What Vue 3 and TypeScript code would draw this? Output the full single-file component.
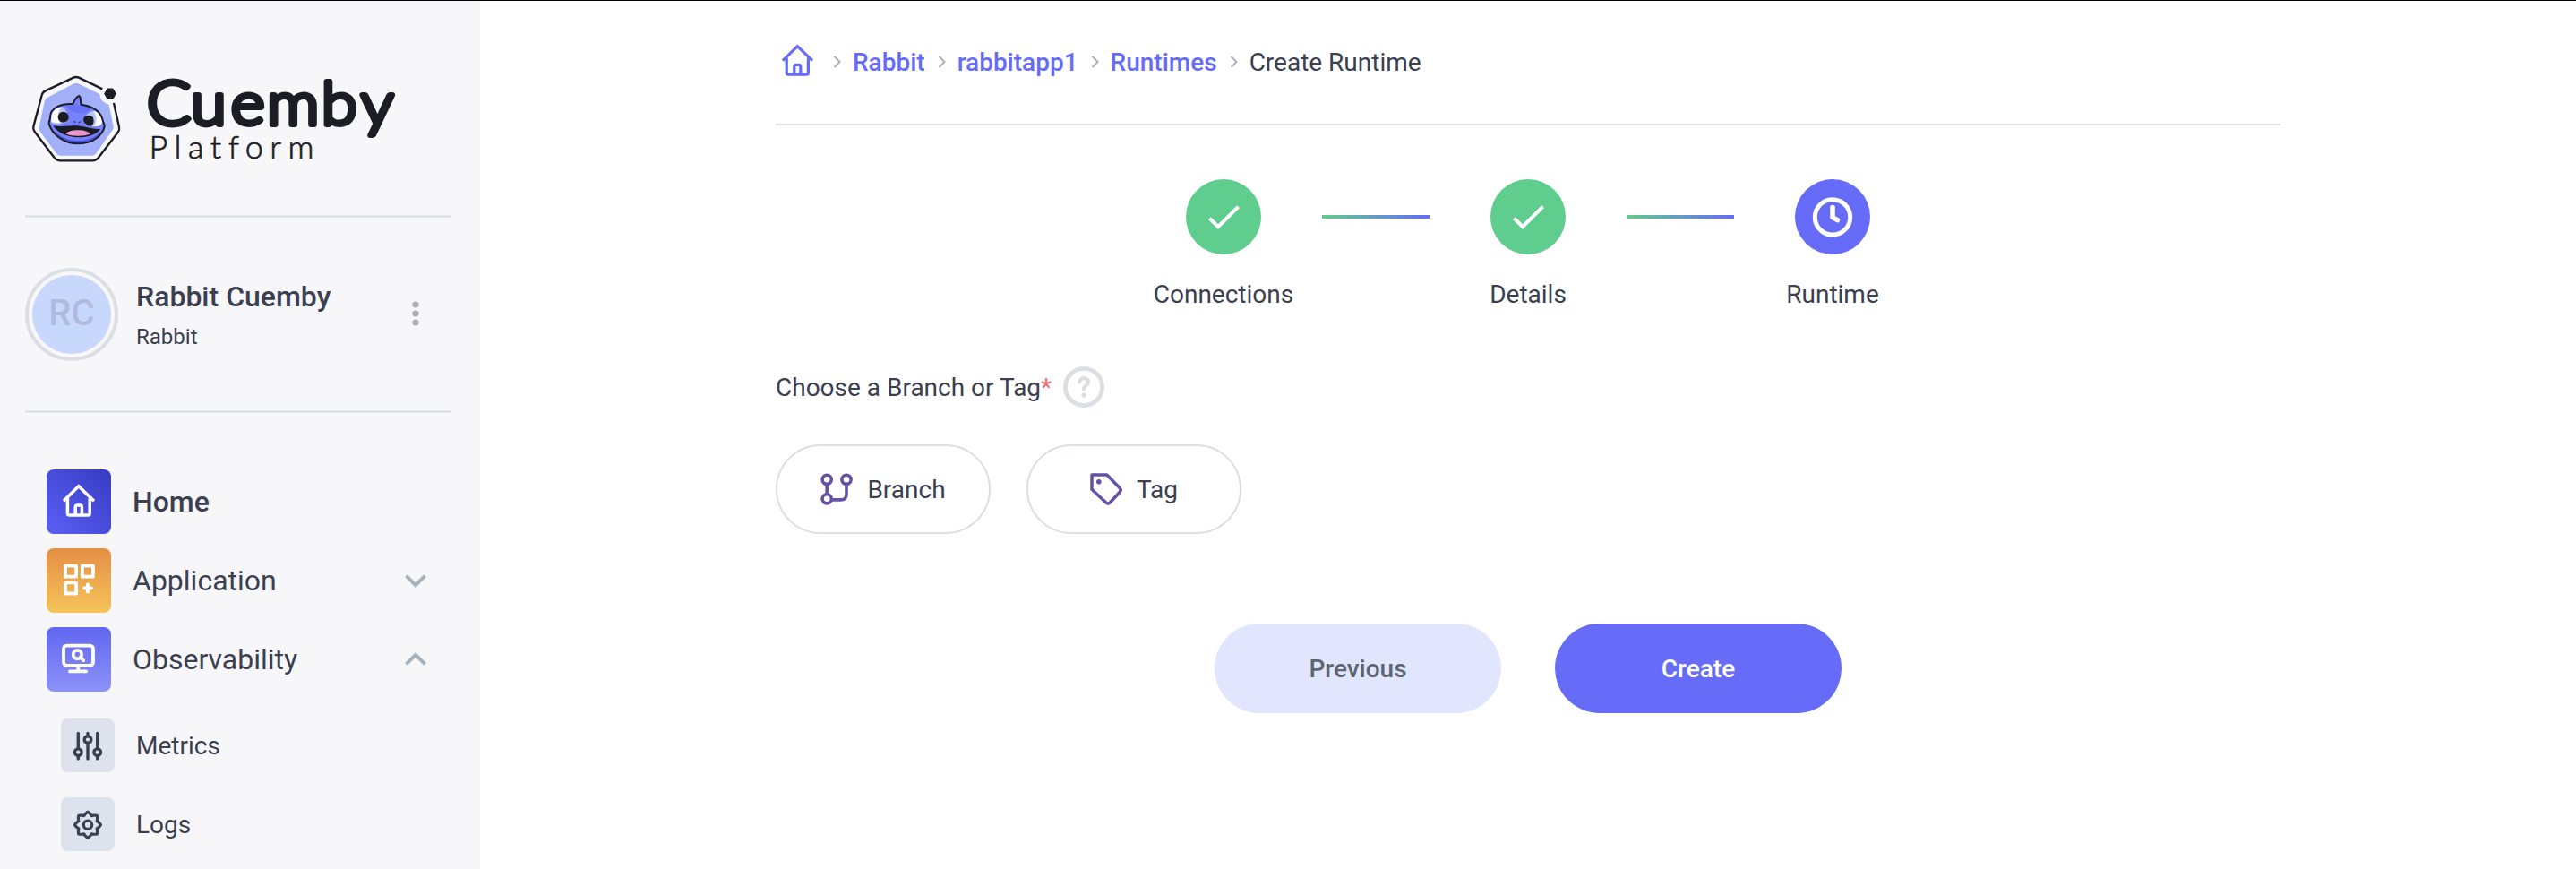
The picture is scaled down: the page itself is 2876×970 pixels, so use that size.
<script setup lang="ts">
interface Crumb {
  label: string
  current?: boolean
}
interface Step {
  label: string
  state: 'done' | 'active'
}

const crumbs: Crumb[] = [
  { label: 'Rabbit' },
  { label: 'rabbitapp1' },
  { label: 'Runtimes' },
  { label: 'Create Runtime', current: true },
]

const steps: Step[] = [
  { label: 'Connections', state: 'done' },
  { label: 'Details', state: 'done' },
  { label: 'Runtime', state: 'active' },
]

// Closed wavy outline with eight lobes for the gear icon
const gearPath: string = (() => {
  const points: string[] = []
  for (let i = 0; i < 160; i++) {
    const a = (i / 160) * Math.PI * 2
    const wave = Math.cos(8 * a)
    const r = 12.7 + 1.75 * wave
    const t = a - 0.035 * Math.sin(16 * a)
    points.push(`${(30 + r * Math.cos(t)).toFixed(2)} ${(30.7 + r * Math.sin(t)).toFixed(2)}`)
  }
  return `M${points.join('L')}Z`
})()
</script>

<template>
  <div class="page">
    <aside class="sidebar">
      <div class="brand">
        <svg class="mascot" viewBox="0 0 390 390" aria-hidden="true">
          <path d="M188 70Q195 66 202 70L296 116L306 146L320 214Q321 220 317 225L262 304Q256 311 248 311H142Q135 311 130 305L74 230Q69 223 71 215L89 130Q91 122 98 117Z" fill="#a2b0f9" />
          <circle cx="309" cy="104" r="35" fill="#f7f7fa" />
          <path d="M283 88L204 50Q195 46 186 50L92 94Q82 99 80 109L52 214Q50 223 56 231L122 318Q130 328 142 328H250Q262 328 269 319L335 233Q341 225 339 215L321 135" fill="none" stroke="#1c1d24" stroke-width="7" />
          <path d="M300 87H318L328 104L318 121H300L290 104Z" fill="#1c1d24" stroke="#1c1d24" stroke-width="3" stroke-linejoin="round" />
          <path d="M184 138C190 124 195 113 205 111C212 116 209 130 212 140C246 145 276 158 284 192C284 201 292 204 290 214C282 246 250 270 204 271C160 272 115 244 104 205C102 195 108 194 108 184C108 148 148 136 184 138Z" fill="#7681fa" />
          <path d="M110 184C110 162 128 148 150 148C165 160 172 180 164 198C145 208 122 208 112 202Z" fill="#b7c3fb" />
          <path d="M112 182C114 163 128 151 146 150C132 164 130 186 142 201C128 204 116 200 112 196Z" fill="#fff" />
          <path d="M225 208C218 185 232 162 256 162C272 164 282 178 282 202C278 212 264 215 250 214Z" fill="#b7c3fb" />
          <path d="M252 162C270 164 281 178 283 200C278 211 266 214 254 213C266 198 266 180 252 162Z" fill="#fff" />
          <path d="M160 143C172 160 188 168 204 168C220 170 236 164 248 152L212 142L184 139Z" fill="#6874f7" />
          <circle cx="152" cy="182" r="18" fill="#1c1d24" />
          <path d="M220 186C224 176 238 174 248 179C256 186 256 204 247 212C232 212 216 202 220 186Z" fill="#1c1d24" />
          <path d="M188 197l4 2M208 198l-4 2" stroke="#303995" stroke-width="4" stroke-linecap="round" />
          <path d="M118 211C142 216 172 211 197 211C224 213 250 224 276 222C262 241 236 250 202 250C166 249 136 238 118 211Z" fill="#1c1d24" />
          <path d="M159 238C170 227 190 224 206 226C222 226 236 231 244 238C222 248 180 248 159 238Z" fill="#ec98cc" />
          <path d="M122 228C144 252 174 261 204 261C236 261 260 249 276 232C264 256 236 268 204 269C168 268 136 252 122 228Z" fill="#4754e8" />
          <path d="M184 138C190 124 195 113 205 111C212 116 209 130 212 140C246 145 276 158 284 192C284 201 292 204 290 214C282 246 250 270 204 271C160 272 115 244 104 205C102 195 108 194 108 184C108 148 148 136 184 138Z" fill="none" stroke="#1c1d24" stroke-width="6" stroke-linejoin="round" />
        </svg>
        <svg class="wordmark" viewBox="0 0 290 110" role="img" aria-label="Cuemby Platform">
          <text class="word" y="63.6" x="0 45.2 86.8 124 180.4 221.2" transform="scale(1.08 1)">Cuemby</text>
          <text class="subword" x="2.5" y="102.3" textLength="184">Platform</text>
        </svg>
      </div>
      <div class="rule"></div>
      <div class="profile">
        <div class="avatar"><div class="avatar-disc">RC</div></div>
        <div class="profile-text">
          <div class="profile-name">Rabbit Cuemby</div>
          <div class="profile-org">Rabbit</div>
        </div>
        <svg class="more" viewBox="0 0 8 28" aria-hidden="true">
          <circle cx="4" cy="4" r="3.6" /><circle cx="4" cy="14" r="3.6" /><circle cx="4" cy="24" r="3.6" />
        </svg>
      </div>
      <div class="rule"></div>

      <nav class="nav">
        <a class="nav-item active">
          <svg class="tile home" viewBox="0 0 72 72" fill="none" stroke="#fff" stroke-width="3.5" stroke-linejoin="round" aria-hidden="true">
            <path d="M19 35.2L35.8 18.7L53 35.2" stroke-linejoin="miter" />
            <path d="M23.4 32V49Q23.4 51 25.4 51H46.2Q48.2 51 48.2 49V32" />
            <path d="M32.2 51V42.2Q32.2 40 34.4 40H37.2Q39.4 40 39.4 42.2V51" />
          </svg>
          <span>Home</span>
        </a>
        <a class="nav-item">
          <svg class="tile app" viewBox="0 0 72 72" fill="none" stroke="#fff" stroke-width="3.8" stroke-linejoin="round" aria-hidden="true">
            <path d="M21 19.6H33.1V31.7H21ZM39.8 19.6H51.9V31.7H39.8ZM21 38.4H33.1V50.5H21Z" />
            <path d="M46 40.6V48.4M42.1 44.5H49.9" stroke-width="4.2" stroke-linecap="round" />
          </svg>
          <span>Application</span>
          <svg class="chevron" viewBox="0 0 24 24" aria-hidden="true"><path d="M7.41 8.58L12 13.17l4.59-4.59L18 10l-6 6-6-6z" /></svg>
        </a>
        <a class="nav-item">
          <svg class="tile obs" viewBox="0 0 72 72" fill="none" stroke="#fff" stroke-width="3.8" stroke-linecap="round" aria-hidden="true">
            <rect x="19" y="20.6" width="33" height="22.3" rx="3.6" />
            <path d="M35.2 43V49M26 49.4H44.2" />
            <circle cx="34.4" cy="30.6" r="4.7" />
            <path d="M37.8 34L41.2 37.2" />
          </svg>
          <span>Observability</span>
          <svg class="chevron" viewBox="0 0 24 24" aria-hidden="true"><path d="M7.41 15.41L12 10.83l4.59 4.58L18 14l-6-6-6 6z" /></svg>
        </a>
        <a class="nav-sub first">
          <svg class="subtile" viewBox="0 0 60 60" fill="none" stroke="#3a4052" stroke-width="3.4" stroke-linecap="round" aria-hidden="true">
            <path d="M19.3 16.4V33.5M19.3 42.5V45M30 16.4V19M30 28V45M40.7 16.4V33.5M40.7 42.5V45" />
            <circle cx="19.3" cy="37.7" r="3.8" /><circle cx="30" cy="23.5" r="3.8" /><circle cx="40.7" cy="37.7" r="3.8" />
          </svg>
          <span>Metrics</span>
        </a>
        <a class="nav-sub">
          <svg class="subtile" viewBox="0 0 60 60" fill="none" stroke="#3a4052" stroke-width="3.2" stroke-linejoin="round" aria-hidden="true">
            <path :d="gearPath" />
            <circle cx="30" cy="30.7" r="4.7" />
          </svg>
          <span>Logs</span>
        </a>
      </nav>
    </aside>

    <main class="main">
      <div class="content">
        <div class="breadcrumb">
          <svg class="crumb-home" viewBox="17 16 38 38" fill="none" stroke="#666cf7" stroke-width="3.3" stroke-linejoin="round" aria-hidden="true">
            <path d="M19 35.2L35.8 18.7L53 35.2" stroke-linejoin="miter" />
            <path d="M23.4 32V49Q23.4 51 25.4 51H46.2Q48.2 51 48.2 49V32" />
            <path d="M32.2 51V42.2Q32.2 40 34.4 40H37.2Q39.4 40 39.4 42.2V51" />
          </svg>
          <template v-for="c in crumbs" :key="c.label">
            <svg class="crumb-sep" viewBox="0 0 10 14" fill="none" stroke="#a9b1bb" stroke-width="2" aria-hidden="true"><path d="M1.5 1L7.5 7L1.5 13" /></svg>
            <span :class="['crumb', { current: c.current }]">{{ c.label }}</span>
          </template>
        </div>

        <div class="steps">
          <template v-for="(s, i) in steps" :key="s.label">
            <div v-if="i > 0" class="connector"></div>
            <div class="step">
              <div :class="['step-dot', s.state]">
                <svg v-if="s.state === 'done'" viewBox="0 0 24 24" fill="#fff" aria-hidden="true"><path d="M21 7L9 19l-5.5-5.5 1.41-1.41L9 16.17 19.59 5.59z" /></svg>
                <svg v-else viewBox="0 0 48 48" fill="none" stroke="#fff" stroke-width="5" stroke-linecap="round" stroke-linejoin="round" aria-hidden="true">
                  <circle cx="24" cy="24.4" r="19.7" />
                  <path d="M24 13.6V24.6L29.4 27.6" stroke-width="5.6" />
                </svg>
              </div>
              <div class="step-label">{{ s.label }}</div>
            </div>
          </template>
        </div>

        <div class="field-label">
          <span>Choose a Branch or Tag<span class="required">*</span></span>
          <svg class="help" viewBox="0 0 46 46" fill="none" stroke="#dbdfe4" stroke-linecap="round" stroke-linejoin="round" aria-hidden="true">
            <circle cx="23" cy="23" r="20.6" stroke-width="4.8" />
            <path d="M18.2 17.2C18.8 11.8 27.6 11.8 28 17.4C28 21.4 23 21.4 23 25.6" stroke-width="4.2" />
            <circle cx="23" cy="32.2" r="2.6" fill="#dbdfe4" stroke="none" />
          </svg>
        </div>

        <div class="choices">
          <button class="choice" type="button">
            <svg viewBox="0 0 36 36" fill="none" stroke="#6651a4" stroke-width="3.6" aria-hidden="true">
              <circle cx="7.2" cy="7.3" r="5.1" /><circle cx="29" cy="7.3" r="5.1" /><circle cx="7.2" cy="28.8" r="5.1" />
              <path d="M7.2 12.5V23.6M12.4 29.9H22.5Q29 29.9 29 23.4V12.5" />
            </svg>
            <span>Branch</span>
          </button>
          <button class="choice" type="button">
            <svg viewBox="0 0 36 36" fill="none" stroke="#6651a4" stroke-width="3.5" stroke-linejoin="round" aria-hidden="true">
              <path d="M2 2H18.8L33.2 16.8Q35.2 19 33.2 21.2L22.2 33Q20 35 17.8 33L2 18.2Z" />
              <circle cx="9.8" cy="9.8" r="2.8" fill="#6651a4" stroke="none" />
            </svg>
            <span>Tag</span>
          </button>
        </div>

        <div class="actions">
          <button class="action secondary" type="button">Previous</button>
          <button class="action primary" type="button">Create</button>
        </div>
      </div>
    </main>
  </div>
</template>

<style>
body {
  margin: 0;
  background: #fff;
}
</style>

<style scoped>
.page {
  box-sizing: border-box;
  display: flex;
  width: 2876px;
  height: 970px;
  overflow: hidden;
  border-top: 1px solid #000;
  font-family: Roboto, "Liberation Sans", sans-serif;
  font-size: 28px;
  color: #3a4052;
}
svg {
  display: block;
  flex: none;
  overflow: visible;
}
.sidebar {
  box-sizing: border-box;
  flex: none;
  width: 536px;
  padding: 0 32px 0 28px;
  background: #f7f7fa;
}
.brand {
  box-sizing: border-box;
  display: flex;
  height: 239px;
  margin-left: -8px;
  padding-top: 69px;
}
.mascot {
  width: 130px;
  height: 130px;
}
.wordmark {
  width: 290px;
  height: 110px;
  margin: 5px 0 0 14px;
}
.word {
  font: 300 67px Lato, sans-serif;
  fill: #1c1d24;
  stroke: #1c1d24;
  stroke-width: 5.8px;
  stroke-linejoin: round;
}
.subword {
  font: 300 36px Lato, sans-serif;
  font-variant-ligatures: none;
  fill: #1c1d24;
  stroke: #1c1d24;
  stroke-width: 0.7px;
}
.rule {
  height: 3px;
  background: linear-gradient(#e6e9ec 0 1px, #d9dde1 1px 2px, #e6e9ec 2px);
}
.profile {
  display: flex;
  align-items: center;
  height: 215px;
}
.avatar {
  box-sizing: border-box;
  display: flex;
  align-items: center;
  justify-content: center;
  width: 104px;
  height: 104px;
  border: 4px solid #dbdfe3;
  border-radius: 50%;
}
.avatar-disc {
  width: 88px;
  height: 88px;
  border-radius: 50%;
  background: #c8d7fc;
  color: #b0b9df;
  font-size: 40px;
  font-weight: 500;
  line-height: 86px;
  text-align: center;
}
.profile-text {
  width: 290px;
  margin: 3px 0 0 20px;
}
.profile-name {
  font-size: 32px;
  font-weight: 500;
  line-height: 48px;
}
.profile-org {
  font-size: 24px;
  line-height: 42px;
}
.more {
  width: 8px;
  height: 28px;
  margin: 0 0 2px 18px;
  fill: #a9b1bb;
}
.nav {
  padding: 63px 16px 0 24px;
}
.nav-item {
  display: flex;
  align-items: center;
  height: 72px;
  margin-bottom: 16px;
  font-size: 32px;
}
.nav-item span {
  flex: 1;
  margin: 0 0 1px 24px;
}
.active {
  font-weight: 500;
}
.tile {
  width: 72px;
  height: 72px;
  border-radius: 8px;
}
.home {
  background: linear-gradient(45deg, #5b60f6, #373bc2);
}
.app {
  background: linear-gradient(#e58e45, #f5c45a);
}
.obs {
  background: linear-gradient(#6166f0, #8e92f9);
}
.chevron {
  width: 48px;
  height: 48px;
  fill: #a9b1bb;
}
.nav-sub {
  display: flex;
  align-items: center;
  gap: 24px;
  height: 60px;
  margin: 0 0 28px 16px;
}
.nav-sub.first {
  margin-top: 30px;
}
.subtile {
  width: 60px;
  height: 60px;
  border-radius: 8px;
  background: #dee2ec;
}
.main {
  flex: 1;
  background: #fff;
}
.content {
  width: 1680px;
  margin: 0 auto;
}
.breadcrumb {
  box-sizing: border-box;
  display: flex;
  align-items: center;
  height: 139px;
  padding: 0 0 1px 6px;
  border-bottom: 2px solid #dbdfe4;
}
.crumb-home {
  width: 37px;
  height: 37px;
  margin: -4px 7px 0 0;
}
.crumb-sep {
  width: 10px;
  height: 14px;
  margin: 0 12px 0 14px;
}
.crumb {
  padding-top: 1px;
  color: #666cf7;
  font-weight: 500;
}
.crumb.current {
  color: #3a4052;
  font-weight: 400;
}
.steps {
  display: flex;
  justify-content: center;
  padding-top: 60px;
}
.step {
  display: flex;
  flex-direction: column;
  align-items: center;
  width: 220px;
}
.step-dot {
  display: flex;
  align-items: center;
  justify-content: center;
  width: 84px;
  height: 84px;
  border-radius: 50%;
}
.step-dot svg {
  width: 48px;
  height: 48px;
}
.done {
  background: #5fcd8d;
}
.step-dot.active {
  background: #666cf7;
}
.connector {
  width: 120px;
  height: 4px;
  margin-top: 40px;
  background: linear-gradient(90deg, #5fcd8d, #666cf7);
}
.step-label {
  margin-top: 25px;
  line-height: 40px;
}
.field-label {
  display: flex;
  align-items: center;
  gap: 13px;
  height: 46px;
  margin-top: 60px;
}
.required {
  color: #f26d6d;
}
.help {
  width: 46px;
  height: 46px;
}
.choices {
  display: flex;
  gap: 40px;
  margin-top: 41px;
}
.choice {
  box-sizing: border-box;
  display: flex;
  align-items: center;
  justify-content: center;
  gap: 16px;
  width: 240px;
  height: 100px;
  padding: 0;
  border: 2px solid #dbdfe4;
  border-radius: 50px;
  background: #fff;
  color: inherit;
  font: inherit;
}
.choice svg {
  width: 36px;
  height: 36px;
}
.actions {
  display: flex;
  justify-content: center;
  gap: 60px;
  margin-top: 100px;
}
.action {
  width: 320px;
  height: 100px;
  border: 0;
  border-radius: 50px;
  font: 500 28px Roboto, sans-serif;
}
.secondary {
  background: #e1e6fe;
  color: #5d6570;
}
.primary {
  background: #666cf7;
  color: #fff;
}
</style>
